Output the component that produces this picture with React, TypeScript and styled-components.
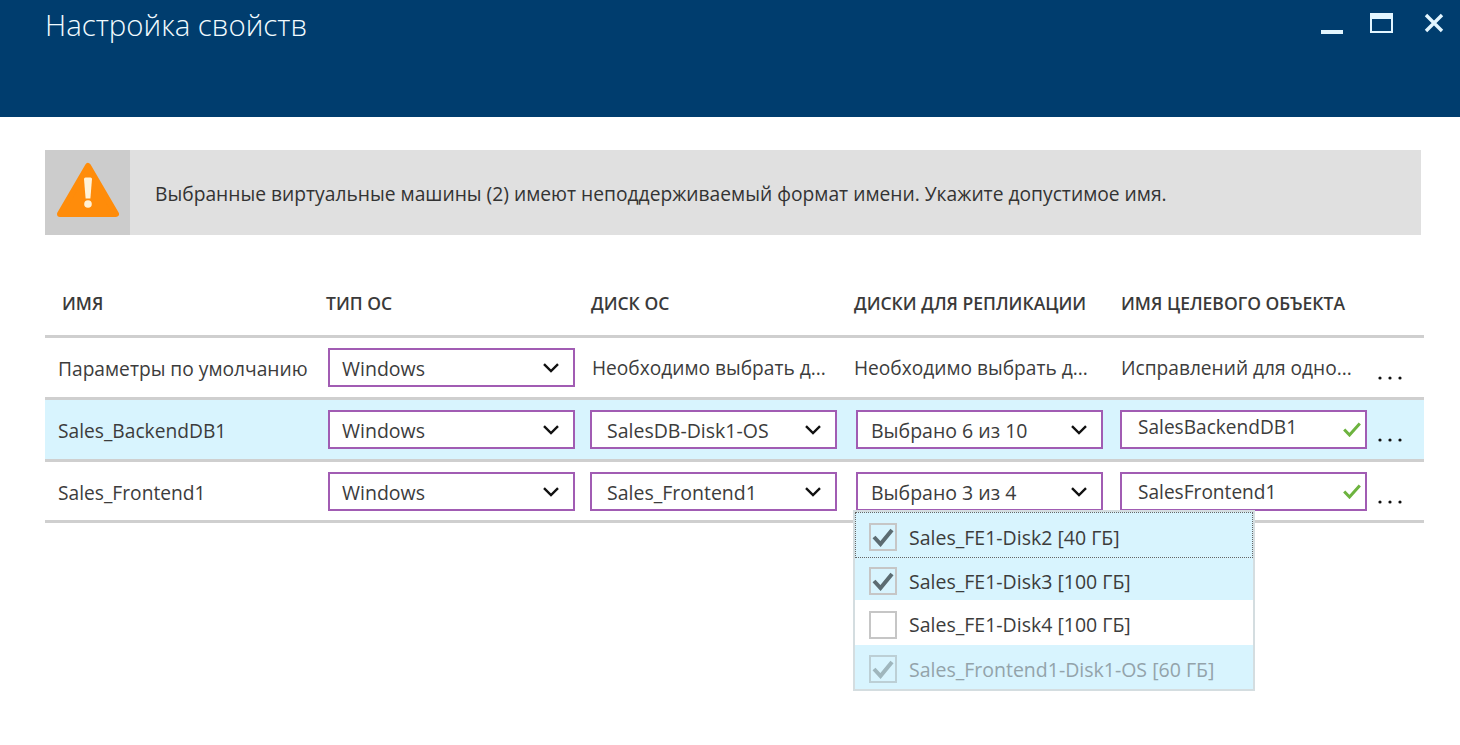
import styled, { createGlobalStyle } from 'styled-components';

const GlobalStyle = createGlobalStyle`
  html, body {
    margin: 0;
    padding: 0;
    background: #ffffff;
  }
  body {
    font-family: "Open Sans", "Noto Sans", sans-serif;
    color: #3c3c3c;
  }
`;

const Chevron = () => (
  <svg width="16" height="10" viewBox="0 0 16 10">
    <path d="M1 1.2 L8 8 L15 1.2" fill="none" stroke="#111" strokeWidth="2.4" />
  </svg>
);

const GreenCheck = () => (
  <svg width="18" height="15" viewBox="0 0 18 15">
    <path d="M1.2 7.5 L6.5 13 L16.8 1.5" fill="none" stroke="#6db33f" strokeWidth="3" />
  </svg>
);

const MoreDots = () => (
  <svg width="26" height="4" viewBox="0 0 26 4">
    <circle cx="3" cy="2" r="1.6" fill="#111" />
    <circle cx="13" cy="2" r="1.6" fill="#111" />
    <circle cx="23" cy="2" r="1.6" fill="#111" />
  </svg>
);

const BoxCheck = ({ color }: { color: string }) => (
  <svg width="22" height="20" viewBox="0 0 22 20">
    <path d="M2 10 L8.5 17 L20 3" fill="none" stroke={color} strokeWidth="4" />
  </svg>
);

const Warning = () => (
  <svg width="62" height="56" viewBox="0 0 62 56">
    <path d="M31 4 L59 52 L3 52 Z" fill="#ff8c0a" stroke="#ff8c0a" strokeWidth="6" strokeLinejoin="round" />
    <path d="M27 17 Q27 15.5 28.5 15.5 H33.5 Q35 15.5 35 17 L33.4 36.5 H28.6 Z" fill="#fff2d8" />
    <circle cx="31" cy="42" r="3.8" fill="#fff2d8" />
  </svg>
);

const columns = [
  { label: 'ИМЯ' },
  { label: 'ТИП ОС' },
  { label: 'ДИСК ОС' },
  { label: 'ДИСКИ ДЛЯ РЕПЛИКАЦИИ' },
  { label: 'ИМЯ ЦЕЛЕВОГО ОБЪЕКТА' },
];

const diskOptions = [
  { label: 'Sales_FE1-Disk2 [40 ГБ]', height: 46, checked: true, selected: true, focused: true, disabled: false },
  { label: 'Sales_FE1-Disk3 [100 ГБ]', height: 42, checked: true, selected: true, focused: false, disabled: false },
  { label: 'Sales_FE1-Disk4 [100 ГБ]', height: 45, checked: false, selected: false, focused: false, disabled: false },
  { label: 'Sales_Frontend1-Disk1-OS [60 ГБ]', height: 44, checked: true, selected: true, focused: false, disabled: true },
];

const App = () => (
  <>
    <GlobalStyle />
    <Page>
      <Header>
        <Title>Настройка свойств</Title>
        <WindowControls>
          <MinimizeButton />
          <MaximizeButton />
          <svg width="20" height="20" viewBox="0 0 20 20">
            <path d="M2 2 L18 18 M18 2 L2 18" stroke="#e3f6ff" strokeWidth="3.4" />
          </svg>
        </WindowControls>
      </Header>

      <Content>
        <Banner>
          <BannerIcon>
            <Warning />
          </BannerIcon>
          <BannerText>
            Выбранные виртуальные машины (2) имеют неподдерживаемый формат имени. Укажите допустимое имя.
          </BannerText>
        </Banner>

        <TableHead>
          {columns.map((c) => (
            <HeadCell key={c.label}>{c.label}</HeadCell>
          ))}
        </TableHead>

        <Row $height={62}>
          <NameCell>Параметры по умолчанию</NameCell>
          <Select $pad={12}>
            <span>Windows</span>
            <Chevron />
          </Select>
          <PlainCell $shift={2}>Необходимо выбрать д...</PlainCell>
          <PlainCell $shift={-2}>Необходимо выбрать д...</PlainCell>
          <PlainCell $shift={1}>Исправлений для одно...</PlainCell>
          <More>
            <MoreDots />
          </More>
        </Row>

        <Row $height={62} $highlight>
          <NameCell>Sales_BackendDB1</NameCell>
          <Select $pad={12}>
            <span>Windows</span>
            <Chevron />
          </Select>
          <Select $pad={15}>
            <span>SalesDB-Disk1-OS</span>
            <Chevron />
          </Select>
          <Select $pad={13}>
            <span>Выбрано 6 из 10</span>
            <Chevron />
          </Select>
          <TextInput $raised>
            <span>SalesBackendDB1</span>
            <GreenCheck />
          </TextInput>
          <More>
            <MoreDots />
          </More>
        </Row>

        <Row $height={61}>
          <NameCell>Sales_Frontend1</NameCell>
          <Select $pad={12}>
            <span>Windows</span>
            <Chevron />
          </Select>
          <Select $pad={15}>
            <span>Sales_Frontend1</span>
            <Chevron />
          </Select>
          <Select $pad={13}>
            <span>Выбрано 3 из 4</span>
            <Chevron />
          </Select>
          <TextInput>
            <span>SalesFrontend1</span>
            <GreenCheck />
          </TextInput>
          <More>
            <MoreDots />
          </More>
        </Row>
        <TableEnd />

        <DiskMenu>
          {diskOptions.map((o) => (
            <DiskOption
              key={o.label}
              $height={o.height}
              $selected={o.selected}
              $focused={o.focused}
              $disabled={o.disabled}
            >
              <CheckBox $disabled={o.disabled}>
                {o.checked && <BoxCheck color={o.disabled ? '#9fb6bd' : '#5c6c72'} />}
              </CheckBox>
              <span>{o.label}</span>
            </DiskOption>
          ))}
        </DiskMenu>
      </Content>
    </Page>
  </>
);

const Page = styled.div`
  width: 1460px;
  height: 745px;
  overflow: hidden;
  background: #ffffff;
`;

const Header = styled.header`
  height: 117px;
  box-sizing: border-box;
  background: #003d6e;
  padding: 5px 16px 0 45px;
  display: flex;
  justify-content: space-between;
  align-items: flex-start;
`;

const Title = styled.h1`
  margin: 0;
  font-size: 29.4px;
  line-height: 40px;
  font-weight: 300;
  color: #f2fbff;
`;

const WindowControls = styled.div`
  display: flex;
  align-items: flex-start;
  gap: 31px;
  margin-top: 8px;
`;

const MinimizeButton = styled.div`
  width: 22px;
  height: 4px;
  margin-top: 17px;
  background: #e3f6ff;
`;

const MaximizeButton = styled.div`
  width: 23px;
  height: 20px;
  box-sizing: border-box;
  border: 2px solid #e3f6ff;
  border-top-width: 6px;
  margin-left: -4px;
`;

const Content = styled.main`
  position: relative;
  padding: 33px 36px 0 45px;
`;

const Banner = styled.div`
  display: flex;
  align-items: center;
  width: 1376px;
  height: 85px;
  background: #e0e0e0;
`;

const BannerIcon = styled.div`
  width: 85px;
  height: 85px;
  padding-bottom: 6px;
  box-sizing: border-box;
  background: #cccccc;
  display: flex;
  align-items: center;
  justify-content: center;
`;

const BannerText = styled.p`
  margin: 2px 0 0 25px;
  font-size: 19.24px;
  color: #333333;
  white-space: nowrap;
`;

const TableHead = styled.div`
  display: grid;
  grid-template-columns: 264px 265px 263px 267px 1fr;
  padding-left: 17px;
  height: 100px;
  box-sizing: border-box;
  padding-top: 56px;
`;

const HeadCell = styled.div`
  font-size: 17.5px;
  line-height: 24px;
  font-weight: 600;
  color: #3a3a3a;
  white-space: nowrap;
`;

const Row = styled.div<{ $height: number; $highlight?: boolean }>`
  display: grid;
  grid-template-columns: 283px 262px 266px 264px 256px 1fr;
  align-items: start;
  box-sizing: border-box;
  height: ${(p) => p.$height}px;
  border-top: 3px solid #cfcfcf;
  padding-top: 10px;
  background: ${(p) => (p.$highlight ? '#d8f4fe' : '#ffffff')};
`;

const TableEnd = styled.div`
  height: 3px;
  background: #cfcfcf;
`;

const NameCell = styled.div`
  padding-left: 13px;
  font-size: 19.2px;
  line-height: 41px;
  white-space: nowrap;
`;

const PlainCell = styled.div<{ $shift: number }>`
  font-size: 19.15px;
  line-height: 41px;
  white-space: nowrap;
  margin-left: ${(p) => p.$shift}px;
`;

const Select = styled.div<{ $pad: number }>`
  width: 247px;
  height: 39px;
  box-sizing: border-box;
  display: flex;
  align-items: center;
  justify-content: space-between;
  padding: 0 14px 0 ${(p) => p.$pad}px;
  background: #ffffff;
  border: 2px solid #a15cb3;
  font-size: 19.5px;
  white-space: nowrap;

  span {
    padding-top: 1px;
  }
`;

const TextInput = styled.div<{ $raised?: boolean }>`
  width: 247px;
  height: 39px;
  box-sizing: border-box;
  display: flex;
  align-items: center;
  justify-content: space-between;
  padding: 0 4px 0 16px;
  background: #ffffff;
  border: 2px solid #a15cb3;
  font-size: 19.1px;
  white-space: nowrap;

  span {
    margin-bottom: ${(p) => (p.$raised ? 5 : 0)}px;
  }
`;

const More = styled.div`
  display: flex;
  padding: 28px 0 0 1px;
`;

const DiskMenu = styled.div`
  position: absolute;
  left: 853px;
  top: 393px;
  width: 402px;
  box-sizing: border-box;
  background: #ffffff;
  border: 2px solid #d4dde0;
`;

const DiskOption = styled.div<{ $height: number; $selected: boolean; $focused: boolean; $disabled: boolean }>`
  display: flex;
  align-items: center;
  gap: 12px;
  box-sizing: border-box;
  height: ${(p) => p.$height}px;
  padding: 4px 0 0 14px;
  font-size: 19.5px;
  white-space: nowrap;
  background: ${(p) => (p.$selected ? '#d8f4fe' : '#ffffff')};
  color: ${(p) => (p.$disabled ? '#93a3aa' : '#3c3c3c')};
  outline: ${(p) => (p.$focused ? '1px dotted #666' : 'none')};
  outline-offset: -1px;
`;

const CheckBox = styled.div<{ $disabled: boolean }>`
  width: 28px;
  height: 28px;
  box-sizing: border-box;
  border: 2px solid ${(p) => (p.$disabled ? '#bccfd5' : '#c6c6c6')};
  display: flex;
  align-items: center;
  justify-content: center;
`;

export default App;
